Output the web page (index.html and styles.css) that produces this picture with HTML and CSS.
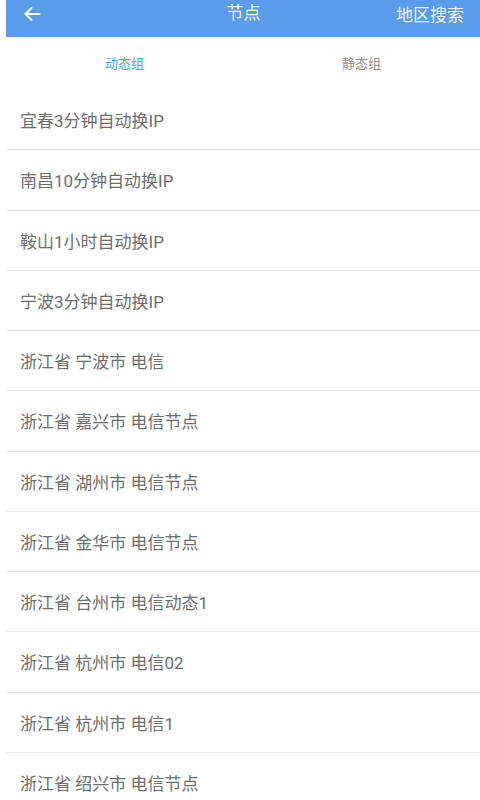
FILE: index.html
```html
<!DOCTYPE html>
<html lang="zh-CN">
<head>
<meta charset="utf-8">
<title>节点</title>
<link rel="stylesheet" href="styles.css">
</head>
<body>
<div class="page">
  <header class="topbar">
    <span class="back">
      <svg width="18" height="16" viewBox="0 0 18 16"><path d="M16.5 8H2.5M8.5 2L2.5 8L8.5 14" fill="none" stroke="#fff" stroke-width="2" stroke-linecap="round" stroke-linejoin="round"/></svg>
    </span>
    <span class="title">节点</span>
    <span class="action">地区搜索</span>
  </header>
  <nav class="tabs">
    <span class="tab active">动态组</span>
    <span class="tab">静态组</span>
  </nav>
  <ul class="list">
    <li class="item">宜春3分钟自动换IP</li>
    <li class="item">南昌10分钟自动换IP</li>
    <li class="item">鞍山1小时自动换IP</li>
    <li class="item">宁波3分钟自动换IP</li>
    <li class="item">浙江省 宁波市 电信</li>
    <li class="item">浙江省 嘉兴市 电信节点</li>
    <li class="item">浙江省 湖州市 电信节点</li>
    <li class="item">浙江省 金华市 电信节点</li>
    <li class="item">浙江省 台州市 电信动态1</li>
    <li class="item">浙江省 杭州市 电信02</li>
    <li class="item">浙江省 杭州市 电信1</li>
    <li class="item">浙江省 绍兴市 电信节点</li>
  </ul>
</div>
</body>
</html>
```
FILE: styles.css
```css
html, body {
  margin: 0;
  padding: 0;
  background: #fff;
  overflow: hidden;
}
body {
  font-family: Roboto, "Noto Sans CJK SC", sans-serif;
}
.page {
  margin-left: 6px;
}
.topbar {
  height: 37px;
  background: #5b9beb;
  display: flex;
  align-items: flex-start;
  justify-content: space-between;
  padding: 0 16px 0 17px;
  box-sizing: border-box;
  color: #fff;
}
.back {
  display: flex;
  margin-top: 6px;
  width: 90px;
}
.title {
  font-size: 17px;
  line-height: 24px;
  margin-top: 1px;
  color: #eef4fd;
}
.action {
  font-size: 17px;
  line-height: 24px;
  margin-top: 3px;
  width: 90px;
  text-align: right;
  color: #f2f6fd;
}
.tabs {
  height: 52px;
  display: grid;
  grid-template-columns: 1fr 1fr;
  align-items: center;
  padding-bottom: 1px;
}
.tab {
  text-align: center;
  font-size: 13px;
  line-height: 18px;
  color: #8f8f8f;
  padding-top: 2px;
}
.tab.active {
  color: #45a6d4;
}
.list {
  list-style: none;
  margin: 0;
  padding: 0;
}
.item {
  height: 59.25px;
  border-bottom: 1px solid #e4e4e4;
  display: flex;
  align-items: center;
  padding-left: 14px;
  font-size: 17px;
  color: #6e6e6e;
}
```
